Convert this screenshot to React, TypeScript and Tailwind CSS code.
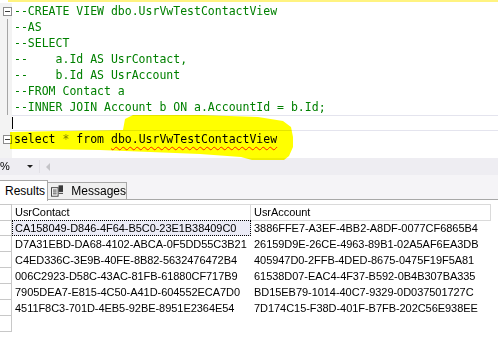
import React from 'react';

type GutterKind = 'box' | 'line' | 'none';

const codeLines: { text: React.ReactNode; gutter: GutterKind }[] = [
  { text: '--CREATE VIEW dbo.UsrVwTestContactView', gutter: 'box' },
  { text: '--AS', gutter: 'line' },
  { text: '--SELECT', gutter: 'line' },
  { text: '--    a.Id AS UsrContact,', gutter: 'line' },
  { text: '--    b.Id AS UsrAccount', gutter: 'line' },
  { text: '--FROM Contact a', gutter: 'line' },
  { text: '--INNER JOIN Account b ON a.AccountId = b.Id;', gutter: 'line' },
];

const rows = [
  ['CA158049-D846-4F64-B5C0-23E1B38409C0', '3886FFE7-A3EF-4BB2-A8DF-0077CF6865B4'],
  ['D7A31EBD-DA68-4102-ABCA-0F5DD55C3B21', '26159D9E-26CE-4963-89B1-02A5AF6EA3DB'],
  ['C4ED336C-3E9B-40FE-8B82-5632476472B4', '405947D0-2FFB-4DED-8675-0475F19F5A81'],
  ['006C2923-D58C-43AC-81FB-61880CF717B9', '61538D07-EAC4-4F37-B592-0B4B307BA335'],
  ['7905DEA7-E815-4C50-A41D-604552ECA7D0', 'BD15EB79-1014-40C7-9329-0D037501727C'],
  ['4511F8C3-701D-4EB5-92BE-8951E2364E54', '7D174C15-F38D-401F-B7FB-202C56E938EE'],
];

function CollapseBox() {
  return (
    <div className="ml-[3px] mt-[4px] w-[9px] h-[9px] border border-[#8c8c8c] bg-white flex items-center justify-center">
      <div className="w-[5px] h-px bg-[#3c3c3c]" />
    </div>
  );
}

function Gutter({ kind }: { kind: GutterKind }) {
  return (
    <div className="w-[12px] h-full bg-[#f3f3f3] relative shrink-0">
      {kind === 'box' && <CollapseBox />}
      {kind === 'line' && <div className="ml-[7px] w-px h-full bg-[#a5a5a5]" />}
    </div>
  );
}

function MessagesIcon() {
  return (
    <svg width="13" height="12" viewBox="0 0 13 12">
      <rect x="0.5" y="2.5" width="7" height="9" fill="#fff" stroke="#404040" />
      <line x1="2" y1="5" x2="6" y2="5" stroke="#404040" />
      <line x1="2" y1="7" x2="6" y2="7" stroke="#404040" />
      <line x1="2" y1="9" x2="6" y2="9" stroke="#404040" />
      <rect x="8" y="0" width="5" height="7" fill="#3a3a3a" />
      <rect x="8" y="8" width="5" height="1" fill="#3a3a3a" />
    </svg>
  );
}

export default function App() {
  return (
    <div className="w-[498px] h-[338px] overflow-hidden relative bg-white">
      {/* Query editor */}
      <div className="h-[158px] flex flex-col pt-[3px] font-['DejaVu_Sans_Mono',monospace] text-[11.5px] bg-white">
        {codeLines.map((l, i) => (
          <div key={i} className="h-[16px] flex">
            <Gutter kind={l.gutter} />
            <div className="pl-[2px] leading-[16px] text-[#008000] whitespace-pre">{l.text}</div>
          </div>
        ))}
        {/* current line */}
        <div className="h-[16px] flex">
          <Gutter kind="none" />
          <div className="flex-1 border-y border-[#e4e4ee] relative">
            <div className="absolute left-0 top-[1px] w-px h-[12px] bg-black" />
          </div>
        </div>
        <div className="h-[16px] flex">
          <Gutter kind="box" />
          <div className="pl-[2px] leading-[16px] whitespace-pre text-[#0000ff]">
            select <span className="text-[#808080]">*</span> from{' '}
            <span className="text-black underline decoration-wavy decoration-[#ff2020] decoration-1 underline-offset-[3px]">
              dbo.UsrVwTestContactView
            </span>
          </div>
        </div>
        <div className="flex-1 flex">
          <div className="w-[12px] bg-[#f3f3f3]" />
        </div>
      </div>

      {/* Zoom bar */}
      <div className="h-[17px] bg-[#eeedf2] flex items-center font-['Liberation_Sans',sans-serif] text-[11px] text-black">
        <span>%</span>
        <svg className="ml-[17px]" width="6" height="4" viewBox="0 0 6 4">
          <path d="M0 0 H6 L3 3 Z" fill="#1e1e1e" />
        </svg>
        <div className="ml-[6px] w-px h-[13px] bg-[#e2e0e6]" />
        <svg className="ml-[6px]" width="4" height="8" viewBox="0 0 4 8">
          <path d="M4 0 V8 L0 4 Z" fill="#c4c4c8" />
        </svg>
      </div>

      {/* Tabs */}
      <div className="h-[25px] bg-[#f5f4f7] flex items-end font-['Liberation_Sans',sans-serif] text-[12px] text-black">
        <div className="w-[48px] h-[21px] bg-white border-t border-r border-[#a8a8a8] flex items-center pl-[5px] mb-[-1px] relative z-10">
          Results
        </div>
        <div className="w-[79px] h-[18px] bg-[#f0f0f0] border border-l-0 border-[#a8a8a8] flex items-center gap-[8px] pl-[3px]">
          <MessagesIcon />
          <span>Messages</span>
        </div>
        <div className="flex-1 border-b border-[#a8a8a8]" />
      </div>

      {/* Results grid */}
      <div className="bg-white pt-[4px] font-['Liberation_Sans',sans-serif] text-[11px] text-black tracking-[-0.05px]">
        <div className="grid grid-cols-[12px_239px_240px] h-[16px] leading-[15px]">
          <div className="border-y border-r border-[#c8c8c8]" />
          <div className="border-y border-r border-[#dadada] pl-[3px]">UsrContact</div>
          <div className="border-y border-r border-[#dadada] pl-[3px]">UsrAccount</div>
        </div>
        {rows.map((r, i) => (
          <div key={i} className="grid grid-cols-[12px_239px_240px] h-[16px] leading-[16px]">
            <div className="border-b border-r border-[#c8c8c8]" />
            <div
              className={
                i === 0
                  ? 'border border-dotted border-black bg-[#ebebf6] pl-[2px] leading-[14px]'
                  : 'pl-[3px]'
              }
            >
              {r[0]}
            </div>
            <div className="pl-[3px]">{r[1]}</div>
          </div>
        ))}
        <div className="grid grid-cols-[12px_239px_240px] h-[16px]">
          <div className="border-b border-r border-[#c8c8c8]" />
        </div>
      </div>

      {/* highlighter marks */}
      <div className="absolute left-[8px] top-0 right-0 h-[2px] bg-[#fff380] mix-blend-multiply pointer-events-none" />
      <svg
        className="absolute left-0 top-0 mix-blend-multiply pointer-events-none"
        width="498"
        height="170"
        viewBox="0 0 498 170"
      >
        <path
          d="M10,132 L60,131 L123,130 L125,119 L133,115 L200,115 L258,117 L283,121 L291,127 L293,137 L293,147 L289,156 L284,160 L252,160 L241,157 L200,154 L150,152 L100,150 L40,149 L10,149 Z"
          fill="#ffff00"
        />
      </svg>
    </div>
  );
}
